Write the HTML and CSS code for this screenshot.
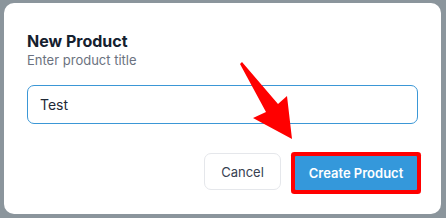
FILE: index.html
```html
<!DOCTYPE html>
<html lang="en">

<head>
  <meta charset="UTF-8">
  <meta name="viewport" content="width=device-width, initial-scale=1.0">
  <title>New Product</title>
  <link rel="stylesheet" href="styles.css">
</head>

<body>
  <div class="Dialog">
    <h2 class="Dialog-title">New Product</h2>
    <label class="Dialog-label" for="productTitle">Enter product title</label>
    <input type="text" id="productTitle" class="Dialog-input" value="Test" />
    <div class="Dialog-actions">
      <button class="Btn Btn--ghost">Cancel</button>
      <button class="Btn Btn--primary">Create Product</button>
    </div>
    <svg class="Pointer" xmlns="http://www.w3.org/2000/svg" viewBox="0 0 60 80">
      <path d="M1 2 L3 0 L39 42 L48 34 L53 77 L14 56 L27 50 Z" />
    </svg>
  </div>
</body>

</html>
```

FILE: styles.css
```css
body {
  background: #8b959c;
  font-family: Inter, "Noto Sans", Arial, sans-serif;
  margin: 0;
  padding: 3px 5px 4px 4px;
}

* {
  box-sizing: border-box;
}

.Dialog {
  position: relative;
  background: #fff;
  border-radius: 10px;
  height: 211px;
  padding: 28px 23px 24px;
  display: flex;
  flex-direction: column;
}

.Dialog-title {
  margin: 0;
  font-size: 16px;
  line-height: 20px;
  font-weight: 700;
  color: #14202e;
}

.Dialog-label {
  display: block;
  font-size: 13px;
  line-height: 18px;
  color: #6b7280;
}

.Dialog-input {
  -webkit-appearance: none;
  appearance: none;
  margin-top: 16px;
  width: 100%;
  height: 39px;
  padding: 0 12px;
  border: 1px solid #3b97d6;
  border-radius: 7px;
  font-family: inherit;
  font-size: 14px;
  color: #1f2937;
}

.Dialog-input:focus {
  outline: 0;
}

.Dialog-actions {
  display: flex;
  justify-content: flex-end;
  align-items: flex-end;
  gap: 14px;
  margin-top: 29px;
  padding-right: 1px;
}

.Btn {
  -webkit-appearance: none;
  appearance: none;
  font-family: inherit;
  font-size: 13px;
  cursor: pointer;
}

.Btn--ghost {
  background: #fff;
  border: 1px solid #e5e7eb;
  border-radius: 7px;
  width: 77px;
  height: 37px;
  color: #374151;
}

.Btn--primary {
  background: #3498db;
  border: 0;
  border-radius: 1px;
  width: 122px;
  height: 34px;
  color: #fff;
  font-weight: 600;
  box-shadow: 0 0 0 4px #ff0000;
}

.Pointer {
  position: absolute;
  left: 235px;
  top: 59px;
  width: 60px;
  height: 80px;
  fill: #ff0000;
}
```
